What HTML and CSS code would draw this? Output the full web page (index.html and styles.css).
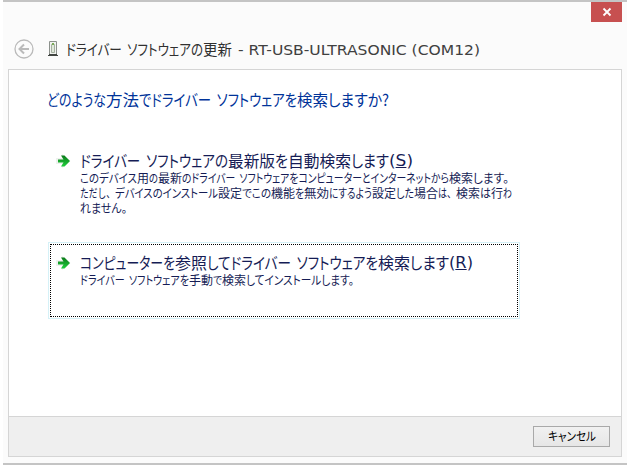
FILE: index.html
```html
<!DOCTYPE html>
<html lang="ja">
<head>
<meta charset="utf-8">
<title>ドライバー ソフトウェアの更新</title>
<link rel="stylesheet" href="styles.css">
</head>
<body>
<div class="window">
  <div class="titlebar"><button class="close" aria-label="閉じる"><svg width="10" height="10" viewBox="0 0 10 10"><path d="M1.500 1.500 8.500 8.500M8.500 1.500 1.500 8.500"/></svg></button></div>
  <header>
    <svg class="back" width="20" height="20" viewBox="0 0 20 20"><circle cx="10" cy="10" r="9"/><path d="M15 10H6M10 5.500 5.500 10l4.500 4.500"/></svg>
    <svg class="device" width="11" height="16" viewBox="0 0 11 16"><path fill="#f1f3f0" stroke="#8c918c" d="M1.500.5h7v13h-7z"/><path fill="#e0e8db" stroke="#a5b0a0" d="M3.500 3.500h3v8h-3z"/><path fill="#79a957" d="M4 2h2v2H4z"/><path fill="#424642" d="M1 13h8v1h1v1H0v-1h1z"/></svg>
    <h1><span data-w="137">ドライバー ソフトウェアの</span><span data-w="35">更新 </span><span class="latin" data-w="242">- RT-USB-ULTRASONIC (COM12)</span></h1>
  </header>
  <main>
    <section class="content">
      <h2><span data-w="59">どのような</span><span data-w="33">方法</span><span data-w="158">でドライバー ソフトウェアを</span><span data-w="31">検索</span><span data-w="61">しますか?</span></h2>
      <div class="option">
        <svg class="arrow" width="15" height="14" viewBox="0 0 15 14"><defs><linearGradient id="green" x1="0" x2="0" y1="0" y2="1"><stop offset="0" stop-color="#0b7a1a"/><stop offset="1" stop-color="#1fd03c"/></linearGradient></defs><path class="glow" d="M1 5h6V2l6 5-6 5V9H1z"/><path class="shape" d="M2 5.500h5.500L5 1.500h3.500L14 7l-5.500 5.500H5l2.500-4H2z"/></svg>
        <div>
          <h3><span data-w="148">ドライバー ソフトウェアの</span><span data-w="47">最新版</span><span data-w="13">を</span><span data-w="63">自動検索</span><span data-w="38">します</span><span class="latin" data-w="24">(<u>S</u>)</span></h3>
          <p><span data-w="57">このデバイス</span><span data-w="12">用</span><span data-w="9">の</span><span data-w="24">最新</span><span data-w="267">のドライバー ソフトウェアをコンピューターとインターネットから</span><span data-w="24">検索</span><span data-w="36">します。</span></p>
          <p><span class="comma" data-w="35">ただし、</span><span data-w="103">デバイスのインストール</span><span data-w="24">設定</span><span data-w="29">でこの</span><span data-w="24">機能</span><span data-w="9">を</span><span data-w="25">無効</span><span data-w="43">にするよう</span><span data-w="24">設定</span><span data-w="18">した</span><span data-w="24">場合</span><span class="comma" data-w="18">は、</span><span data-w="24">検索</span><span data-w="11">は</span><span data-w="12">行</span><span data-w="9">わ</span></p>
          <p><span data-w="47">れません。</span></p>
        </div>
      </div>
      <div class="option focused">
        <svg class="arrow" width="15" height="14" viewBox="0 0 15 14"><path class="glow" d="M1 5h6V2l6 5-6 5V9H1z"/><path class="shape" d="M2 5.500h5.500L5 1.500h3.500L14 7l-5.500 5.500H5l2.500-4H2z"/></svg>
        <div>
          <h3><span data-w="95">コンピューターを</span><span data-w="32">参照</span><span data-w="171">してドライバー ソフトウェアを</span><span data-w="32">検索</span><span data-w="39">します</span><span class="latin" data-w="24">(<u>R</u>)</span></h3>
          <p><span data-w="109">ドライバー ソフトウェアを</span><span data-w="24">手動</span><span data-w="9">で</span><span data-w="24">検索</span><span data-w="108">してインストールします。</span></p>
        </div>
      </div>
    </section>
    <footer><button class="cancel"><span data-w="48">キャンセル</span></button></footer>
  </main>
</div>
<script src="fit.js"></script>
</body>
</html>
```
FILE: styles.css
```css
* { box-sizing: border-box; }
body { margin: 0; width: 627px; height: 466px; overflow: hidden; background: #fff; font-family: "Noto Sans CJK JP", sans-serif; font-feature-settings: "palt"; }
h1, h2, h3, p { margin: 0; font-weight: 400; white-space: pre; display: flex; }
button { font: inherit; padding: 0; margin: 0; }
[data-w] { display: block; flex: none; white-space: pre; transform-origin: left center; word-spacing: .2em; }
.latin { font-family: "DejaVu Sans", sans-serif; word-spacing: 0; }
.comma { font-feature-settings: normal; }
.window { margin-left: 3px; height: 465px; padding: 0 5px 6px; border-top: 2px solid #c4c4c4; border-bottom: 2px solid #c4c4c4; background: #fbfbfb; display: flex; flex-direction: column; }
.titlebar { height: 20px; display: flex; justify-content: flex-end; }
.close { width: 31px; height: 20px; border: 0; background: #c75050; display: flex; align-items: center; justify-content: center; }
.close path { stroke: #fff; stroke-width: 1.8; fill: none; }
header { height: 47px; display: flex; padding: 17px 0 0 6px; }
.back { fill: none; stroke: #bababa; stroke-width: 1.3; }
.back path { stroke-width: 2; }
.device { margin: 2px 0 0 14px; }
h1 { margin-left: 7px; font-size: 15px; line-height: 20px; color: #303030; }
h1 .latin { font-size: 14.5px; line-height: 22px; color: #404040; }
main { width: 614px; flex: 1; border: 1px solid #d5d5d5; display: flex; flex-direction: column; background: #fff; }
.content { flex: 1; padding: 17px 0 0 38px; }
h2 { font-size: 16px; line-height: 24px; color: #003399; }
.option { display: flex; width: 468px; height: 74px; margin: 31px 0 0 3px; padding: 7px 0 0 5px; border: 1px solid transparent; color: #151c55; }
.option div { margin-left: 9px; }
.focused { height: 73px; margin-top: 28px; border: 1px dotted #000; box-shadow: 0 0 0 1px #fff, 0 0 0 2px #d5f1f7; }
.arrow { flex: none; margin-top: 4px; }
.glow { fill: #e2e8e2; stroke: #eef1ee; stroke-width: 2; }
.shape { fill: url(#green); }
h3 { font-size: 16px; line-height: 20px; }
h3 .latin { font-size: 15px; line-height: 22px; height: 20px; }
p { font-size: 12px; line-height: 15px; }
footer { height: 40px; border-top: 1px solid #d5d5d5; background: #efefef; padding: 9px 11px 0 0; display: flex; justify-content: flex-end; }
.cancel { width: 77px; height: 21px; border: 1px solid #a9a9a9; background: linear-gradient(#f1f1f1, #e6e6e6); font-size: 12px; line-height: 18px; color: #000; display: flex; justify-content: center; }
```
FILE: fit.js
```js
for (const run of document.querySelectorAll("[data-w]")) {
  const natural = run.getBoundingClientRect().width;
  const target = Number(run.dataset.w);
  run.style.width = natural + "px";
  run.style.marginRight = target - natural + "px";
  run.style.transform = `scaleX(${target / natural})`;
}
```
